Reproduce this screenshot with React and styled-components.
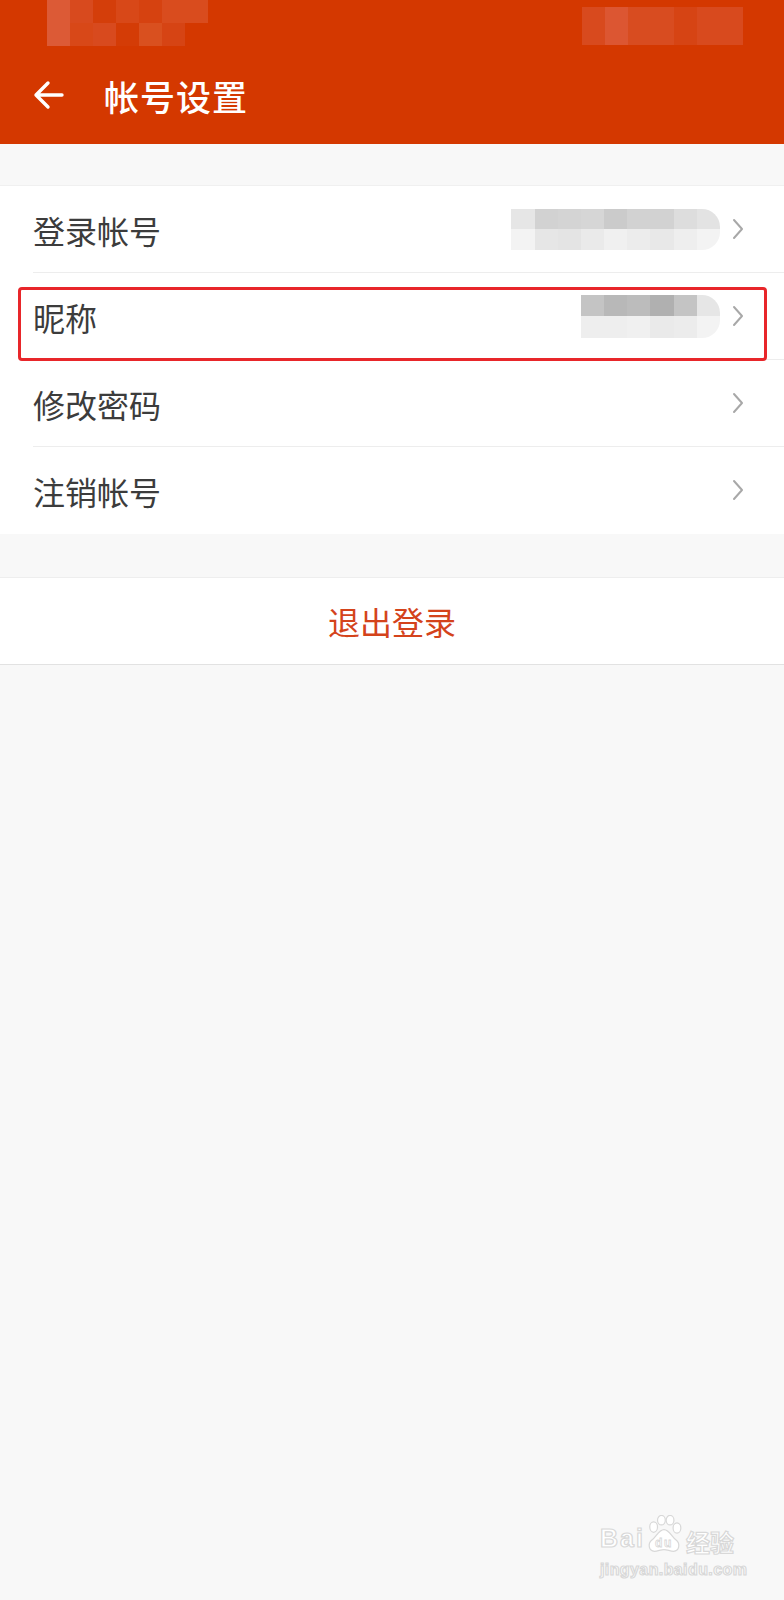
import React from 'react';
import styled, { createGlobalStyle } from 'styled-components';

const GlobalStyle = createGlobalStyle`
  body {
    margin: 0;
    background-color: #f8f8f8;
    font-family: "Noto Sans CJK SC", "Noto Sans", sans-serif;
  }
`;

const Page = styled.div`
  position: relative;
  min-height: 1600px;
  background-color: #f8f8f8;
  overflow: hidden;
`;

const Header = styled.header`
  background-color: #d43800;
  height: 144px;
  display: flex;
  flex-direction: column;
`;

const StatusBar = styled.div`
  height: 50px;
  display: flex;
  justify-content: space-between;
  align-items: flex-start;
  padding: 0 41px 0 47px;
`;

const NavBar = styled.div`
  flex: 1;
  display: flex;
  align-items: center;
  padding: 0 0 4px 33px;
`;

const BackButton = styled.div`
  width: 31px;
  height: 30px;
  display: flex;
  align-items: center;
  margin-right: 40px;
`;

const Title = styled.h1`
  margin: 0;
  font-size: 35px;
  font-weight: 500;
  color: #fff;
  letter-spacing: 1px;
`;

const Mosaic = styled.div`
  display: grid;
  grid-template-columns: repeat(${p => p.$cols}, ${p => p.$cell}px);
  grid-auto-rows: ${p => p.$row}px;
  margin-top: ${p => p.$top || 0}px;
  border-radius: 0 ${p => p.$round || 0}px ${p => p.$round || 0}px 0;
  overflow: hidden;
`;

const Cell = styled.span`
  background-color: ${p => p.$shade};
`;

const Gap = styled.div`
  height: ${p => p.$h}px;
`;

const Card = styled.section`
  background-color: #fff;
  border-top: 1px solid #f0f0f0;
`;

const Row = styled.div`
  position: relative;
  height: 86px;
  margin-left: 33px;
  padding-right: 40px;
  display: flex;
  align-items: center;
  border-bottom: 1px solid ${p => (p.$last ? 'transparent' : '#ededed')};
`;

const Label = styled.span`
  flex: 1;
  font-size: 32px;
  color: #3c3c3c;
  padding-top: 2px;
`;

const Value = styled.div`
  margin-right: 12px;
`;

const Highlight = styled.div`
  position: absolute;
  left: -15px;
  right: 17px;
  top: 14px;
  bottom: -2px;
  border: 3px solid #e8262a;
  border-radius: 4px;
  pointer-events: none;
`;

const Logout = styled.button`
  display: block;
  width: 100%;
  height: 88px;
  border: none;
  border-top: 1px solid #eeeeee;
  border-bottom: 1px solid #e2e2e2;
  background-color: #fff;
  font-family: inherit;
  font-size: 32px;
  color: #d4431b;
  padding: 0;
`;

const Watermark = styled.div`
  position: absolute;
  left: 600px;
  top: 1515px;
  display: flex;
  flex-direction: column;
  align-items: flex-start;
  color: #fff;
  -webkit-text-stroke: 1.2px #d8d8d8;
  font-family: "Liberation Sans", Arial, sans-serif;
`;

const MarkLine = styled.div`
  display: flex;
  align-items: flex-end;
  font-size: 25px;
  font-weight: 700;
  line-height: 1;
  letter-spacing: 2px;
`;

const Paw = styled.svg`
  margin: 0 2px -2px -1px;
`;

const MarkCn = styled.span`
  font-family: "Noto Sans CJK SC", sans-serif;
  font-size: 24px;
  font-weight: 700;
  letter-spacing: 0;
  margin-bottom: -3px;
`;

const MarkUrl = styled.div`
  font-size: 16px;
  font-weight: 700;
  margin-top: 10px;
  letter-spacing: 0.4px;
`;

const Chevron = () => (
  <svg width="12" height="22" viewBox="0 0 12 22">
    <polyline points="2,2 10,11 2,20" fill="none" stroke="#a8a8a8" strokeWidth="2" strokeLinecap="round" strokeLinejoin="round" />
  </svg>
);

const BackArrow = () => (
  <svg width="31" height="30" viewBox="0 0 31 30">
    <path d="M29 15H3M15 3L3 15l12 12" fill="none" stroke="#fff" strokeWidth="3.4" strokeLinecap="round" strokeLinejoin="round" />
  </svg>
);

const accountShades = [
  ['#e6e6e6', '#d2d2d2', '#d4d4d4', '#d6d6d6', '#cbcbcb', '#d2d2d2', '#d2d2d2', '#dddddd', '#e3e3e3'],
  ['#f3f3f3', '#e6e6e6', '#e4e4e4', '#eaeaea', '#f0f0f0', '#ececec', '#e8e8e8', '#eeeeee', '#f3f3f3'],
];

const nickShades = [
  ['#c4c4c4', '#b8b8b8', '#bcbcbc', '#b0b0b0', '#c4c4c4', '#e6e6e6'],
  ['#eeeeee', '#eeeeee', '#f0f0f0', '#eaeaea', '#ececec', '#f3f3f3'],
];

const statusLeft = [
  ['#dc5a36', '#d84a1e', '#d43e0a', '#d84818', '#d64210', '#d94c1e', '#d94c1e'],
  ['#dc5a36', '#d84818', '#d84a1e', '#d43c06', '#d9501f', '#d64414', '#d43800'],
];

const statusRight = [
  ['#d84a1e', '#dc5632', '#d84c20', '#d84c20', '#d64414', '#d84a1e', '#d84a1e'],
  ['#d84a1e', '#dc5632', '#d84c20', '#d84c20', '#d64414', '#d84a1e', '#d84a1e'],
];

function MosaicBlock({ shades, cell, row, top, round }) {
  return (
    <Mosaic $cols={shades[0].length} $cell={cell} $row={row} $top={top} $round={round}>
      {shades.flatMap((line, i) => line.map((s, j) => <Cell key={`${i}-${j}`} $shade={s} />))}
    </Mosaic>
  );
}

const rows = [
  { label: '登录帐号', value: accountShades },
  { label: '昵称', value: nickShades, highlight: true },
  { label: '修改密码' },
  { label: '注销帐号' },
];

function App() {
  return (
    <Page>
      <GlobalStyle />
      <Header>
        <StatusBar>
          <MosaicBlock shades={statusLeft} cell={23} row={23} />
          <MosaicBlock shades={statusRight} cell={23} row={19} top={7} />
        </StatusBar>
        <NavBar>
          <BackButton>
            <BackArrow />
          </BackButton>
          <Title>帐号设置</Title>
        </NavBar>
      </Header>

      <Gap $h={41} />

      <Card>
        {rows.map((r, i) => (
          <Row key={r.label} $last={i === rows.length - 1}>
            {r.highlight && <Highlight />}
            <Label>{r.label}</Label>
            {r.value && (
              <Value>
                <MosaicBlock shades={r.value} cell={23.2} row={r.highlight ? 21.5 : 20.5} round={18} />
              </Value>
            )}
            <Chevron />
          </Row>
        ))}
      </Card>

      <Gap $h={43} />

      <Logout>退出登录</Logout>

      <Watermark>
        <MarkLine>
          Bai
          <Paw width="40" height="38" viewBox="0 0 46 44">
            <g fill="#fff" stroke="#d8d8d8" strokeWidth="1.4">
              <ellipse cx="11" cy="14" rx="4.5" ry="6" />
              <ellipse cx="20" cy="6" rx="4.5" ry="5.5" />
              <ellipse cx="30" cy="6" rx="4.5" ry="5.5" />
              <ellipse cx="38" cy="15" rx="4.5" ry="6" />
              <path d="M23 17c-6 0-9 8-14 12-5 4-4 13 3 13 4 0 7-2 11-2s7 2 11 2c7 0 8-9 3-13-5-4-8-12-14-12z" />
            </g>
            <text x="23" y="37" textAnchor="middle" fontSize="14" fontWeight="700" fill="#fff" stroke="#d8d8d8" strokeWidth="0.9" fontFamily="Liberation Sans, sans-serif">du</text>
          </Paw>
          <MarkCn>经验</MarkCn>
        </MarkLine>
        <MarkUrl>jingyan.baidu.com</MarkUrl>
      </Watermark>
    </Page>
  );
}

export default App;
